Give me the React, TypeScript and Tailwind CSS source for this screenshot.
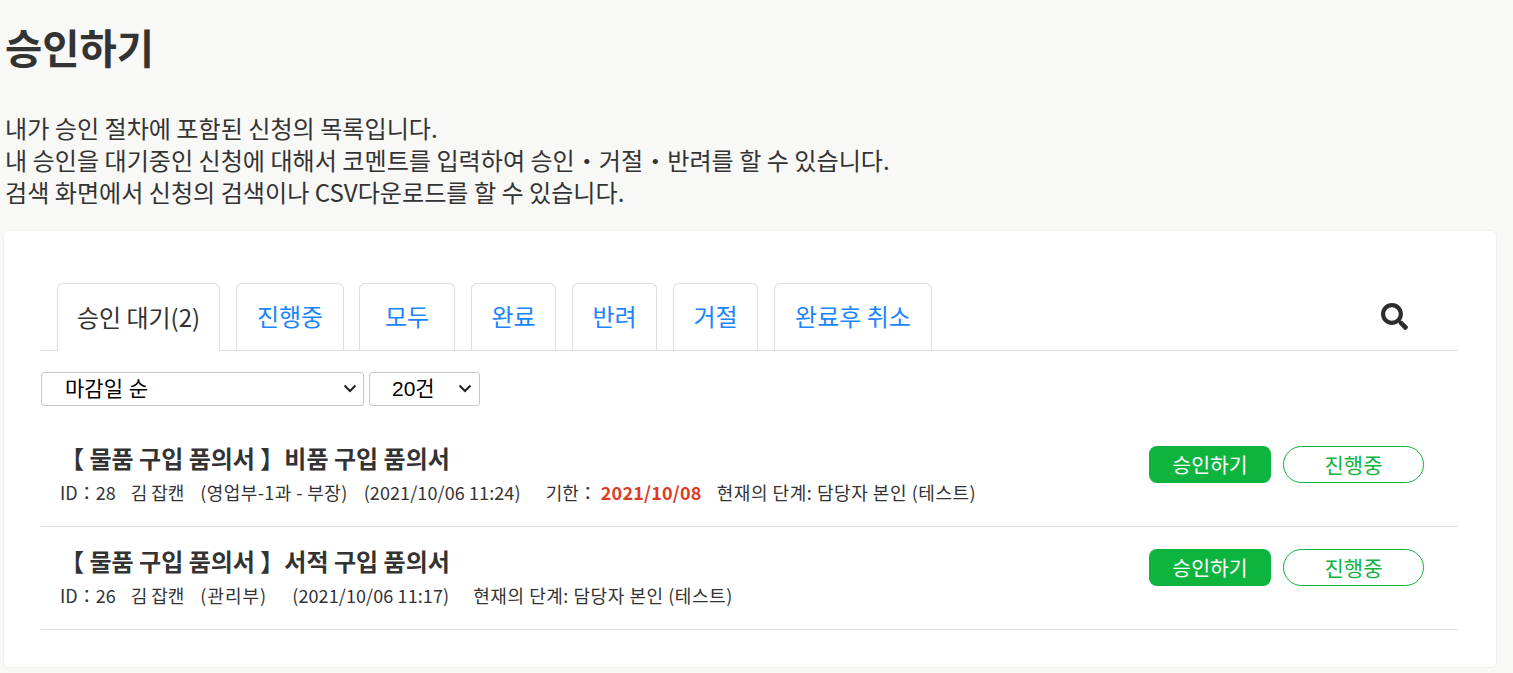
import { FaSearch } from "react-icons/fa";
import clsx from "clsx";

const font = { fontFamily: '"Noto Sans CJK KR", "Noto Sans", sans-serif' };

const tabs = [
  { label: "진행중", width: "w-[108px]" },
  { label: "모두", width: "w-[96px]" },
  { label: "완료", width: "w-[85px]" },
  { label: "반려", width: "w-[85px]" },
  { label: "거절", width: "w-[85px]" },
  { label: "완료후 취소", width: "w-[158px]" },
];

function Chevron({ right }: { right: string }) {
  return (
    <svg className={clsx("pointer-events-none absolute top-[12px]", right)} width="14" height="9" viewBox="0 0 14 9" fill="none">
      <path d="M1.5 1.5 7 7l5.5-5.5" stroke="#222" strokeWidth="2" />
    </svg>
  );
}

function Row({ title, children }: { title: string; children: React.ReactNode }) {
  return (
    <div className="flex h-[103px] items-start justify-between border-b border-[#dedede] pt-[22px]">
      <div className="-mt-[4px]">
        <p className="pl-[19px] text-[24px] leading-[32px] font-bold text-[#333]">{title}</p>
        <div className="mt-[6px] flex pl-[19px] text-[18px] leading-[24px] whitespace-pre text-[#333]">{children}</div>
      </div>
      <div className="flex h-[37px] gap-3 pr-[34px]">
        <button className="h-[37px] w-[122px] rounded-lg bg-[#0db53f] text-[20.5px] text-white">승인하기</button>
        <button className="h-[37px] w-[141px] rounded-full border border-[#0db53f] bg-white text-[21px] text-[#0db53f]">진행중</button>
      </div>
    </div>
  );
}

export default function App() {
  return (
    <div className="h-[673px] overflow-hidden bg-[#f8f8f6] px-[3px]" style={font}>
      <h1 className="pt-[18px] pl-[2px] text-[40.5px] leading-[58px] font-bold text-[#333]">승인하기</h1>
      <div className="mt-[36px] pl-[2px] text-[24.1px] leading-[32px] text-[#333]">
        <p>내가 승인 절차에 포함된 신청의 목록입니다.</p>
        <p>내 승인을 대기중인 신청에 대해서 코멘트를 입력하여 승인・거절・반려를 할 수 있습니다.</p>
        <p>검색 화면에서 신청의 검색이나 CSV다운로드를 할 수 있습니다.</p>
      </div>

      <div className="mt-[22px] h-[438px] w-[1494px] rounded-md border border-[#f0f0ee] bg-white pt-[52px] pr-[38px] pl-[37px]">
        {/* tabs */}
        <div className="flex h-[68px] items-end gap-[16px] border-b border-[#dedede] pl-[16px] text-[24px]">
          <div className="-mb-px flex h-[68px] w-[163px] items-center justify-center rounded-t-md border border-b-0 border-[#dedede] bg-white pb-[2px] text-[#333]">
            승인 대기(2)
          </div>
          {tabs.map((t) => (
            <div
              key={t.label}
              className={clsx(
                "flex h-[67px] items-center justify-center rounded-t-md border border-b-0 border-[#dedede] pb-[2px] text-[#1a85ff]",
                t.width,
                t.label === "모두" && "-ml-px",
              )}
            >
              {t.label}
            </div>
          ))}
          <div className="ml-auto flex h-[67px] items-center pr-[50px] text-[#2d2d2d]">
            <FaSearch size={27} />
          </div>
        </div>

        <div className="mt-[21px] flex gap-[5px]" style={{ fontFamily: '"Liberation Sans", "Noto Sans CJK KR", sans-serif' }}>
          <div className="relative">
            <select className="h-[34px] w-[323px] appearance-none rounded-[3px] border border-[#c8c8c8] bg-white pl-[23px] text-[21px] leading-[32px] text-black">
              <option>마감일 순</option>
            </select>
            <Chevron right="right-[7px]" />
          </div>
          <div className="relative">
            <select className="h-[34px] w-[111px] appearance-none rounded-[3px] border border-[#c8c8c8] bg-white pl-[22px] text-[21px] leading-[32px] text-black">
              <option>20건</option>
            </select>
            <Chevron right="right-[8px]" />
          </div>
        </div>

        <div className="mt-[18px]">
          <Row title="【 물품 구입 품의서 】비품 구입 품의서">
            <span>ID：28</span>
            <span className="ml-[15px]">김 잡캔</span>
            <span className="ml-[16px] tracking-[0.4px]">(영업부-1과 - 부장)</span>
            <span className="ml-[16px] tracking-[0.1px]">(2021/10/06 11:24)</span>
            <span className="ml-[25px]">기한：</span>
            <b className="ml-[4px] tracking-[0.2px] text-[#e03a24]">2021/10/08</b>
            <span className="ml-[15px] tracking-[0.55px]">현재의 단계: 담당자 본인 (테스트)</span>
          </Row>
          <Row title="【 물품 구입 품의서 】서적 구입 품의서">
            <span>ID：26</span>
            <span className="ml-[15px]">김 잡캔</span>
            <span className="ml-[16px] tracking-[1px]">(관리부)</span>
            <span className="ml-[25px] tracking-[0.1px]">(2021/10/06 11:17)</span>
            <span className="ml-[24px] tracking-[0.55px]">현재의 단계: 담당자 본인 (테스트)</span>
          </Row>
        </div>
      </div>
    </div>
  );
}
